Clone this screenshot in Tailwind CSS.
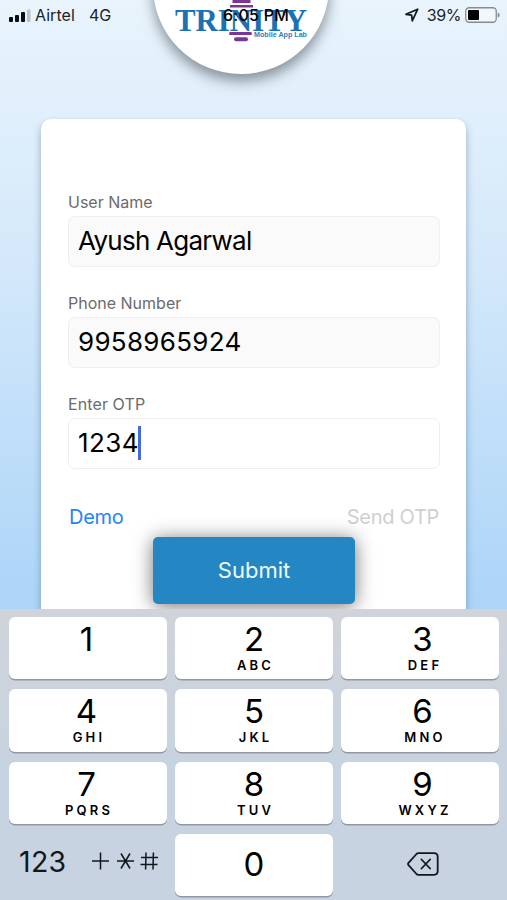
<!DOCTYPE html>
<html lang="en">
<head>
<meta charset="utf-8">
<meta name="viewport" content="width=device-width, initial-scale=1">
<title>Login</title>
<script src="https://cdn.jsdelivr.net/npm/@tailwindcss/browser@4"></script>
</head>
<body class="w-[507px] h-[900px] overflow-hidden font-['Inter','Liberation_Sans',sans-serif] text-black">
<div class="relative flex h-[900px] w-[507px] flex-col overflow-hidden bg-linear-to-b from-[#e9f4fc] from-0% via-[#d3e8fa] via-30% to-[#add5f8] to-66%">

  <!-- Round logo -->
  <div class="absolute left-[152.5px] -top-[102px] size-[176px] rounded-full bg-white shadow-[0_7px_13px_rgba(40,50,60,0.5)]">
    <svg class="absolute left-0 top-[102px]" width="176" height="74" viewBox="0 0 176 74">
      <g fill="#7b3592">
        <path d="M79.500 0h18v3h-18zM77 5h23v2.500h-23z"/>
        <rect x="76" y="32" width="23" height="3" rx="1.500"/>
        <rect x="81" y="37.200" width="14" height="4" rx="2"/>
      </g>
      <text x="22" y="30.500" textLength="132" lengthAdjust="spacingAndGlyphs" font-family="Liberation Serif, serif" font-weight="bold" font-size="31" fill="#1c70b4">TRINITY</text>
      <text x="101" y="36.700" textLength="53" lengthAdjust="spacingAndGlyphs" font-family="Liberation Sans, sans-serif" font-weight="bold" font-size="8" fill="#2c7fbc">Mobile App Lab</text>
    </svg>
  </div>

  <!-- Status bar -->
  <header class="relative flex h-[30px] items-center pl-[9px] pr-[7px] text-[16px] leading-none text-[#1b2329]">
    <svg width="22" height="13" viewBox="0 0 22 13"><g fill="#080d10"><rect x="0" y="8" width="4" height="5" rx="1"/><rect x="6" y="6" width="4" height="7" rx="1"/><rect x="12" y="3" width="4" height="10" rx="1"/></g><rect x="18" y="0.500" width="3.500" height="12.500" rx="1" fill="#b9c1cb"/></svg>
    <span class="ml-1 w-[40px] tracking-[0.05px]">Airtel</span>
    <span class="ml-[14px]">4G</span>
    <span class="absolute left-[223px] whitespace-nowrap font-medium tracking-[0.25px] text-black">6:05 PM</span>
    <svg class="ml-auto" width="14" height="14" viewBox="0 0 14 14" fill="none" stroke="#10181d" stroke-width="1.700" stroke-linejoin="round"><path d="M12.700 1.200 1 6.300 6.600 7.200 7.300 12.800Z"/></svg>
    <span class="ml-[8px] tracking-[-0.4px]">39%</span>
    <svg class="ml-[4px]" width="35" height="16" viewBox="0 0 35 16"><rect x="0.750" y="0.750" width="30.500" height="14.500" rx="3.500" fill="#f2f7fc" stroke="#858c92" stroke-width="1.300"/><rect x="3" y="3" width="11" height="10" rx="1" fill="#000"/><path d="M32.700 5.500q2 .5 2 2.500t-2 2.500z" fill="#858c92"/></svg>
  </header>

  <!-- Login card -->
  <main class="mx-[41px] mt-[89px] flex h-[520px] w-[425px] shrink-0 flex-col rounded-t-[10px] bg-white px-[27px] pt-[70px] shadow-[0_4px_7px_rgba(60,90,120,0.45)]">
    <div class="flex flex-col gap-[24px]">
      <label class="block h-[77px]">
        <span class="block h-[27px] text-[16px] leading-[26px] text-[#6b6b6b]">User Name</span>
        <span class="flex h-[51px] w-[372px] items-center rounded-[7px] border-[1.5px] border-[#efefef] bg-[#fafafa] pb-[2px] pl-[9px] text-[26px] tracking-[-0.75px]">Ayush Agarwal</span>
      </label>
      <label class="block h-[77px]">
        <span class="block h-[27px] text-[16px] leading-[26px] text-[#6b6b6b]">Phone Number</span>
        <span class="flex h-[51px] w-[372px] items-center rounded-[7px] border-[1.5px] border-[#efefef] bg-[#fafafa] pb-[2px] pl-[9px] text-[26px] tracking-[0.3px]">9958965924</span>
      </label>
      <label class="block h-[77px]">
        <span class="block h-[27px] text-[16px] leading-[26px] text-[#6b6b6b] tracking-[0.1px]">Enter OTP</span>
        <span class="flex h-[51px] w-[372px] items-center rounded-[7px] border-[1.5px] border-[#efefef] bg-white pb-[2px] pl-[9px] text-[26px] tracking-[0.4px]">1234<i class="-ml-[0.5px] h-[34px] w-[3px] bg-[#4668e0]"></i></span>
      </label>
    </div>
    <div class="mt-[36.600px] flex h-6 w-[371px] items-center justify-between pl-px text-[20px]">
      <a class="tracking-[-0.3px] text-[#1c86fb]">Demo</a>
      <span class="tracking-[-0.3px] text-[#cfcfcf]">Send OTP</span>
    </div>
    <button class="ml-[85px] mt-[8px] h-[67px] w-[202px] shrink-0 rounded-[5px] bg-[#2487c3] text-[22px] text-[#eefaff] shadow-[0_2px_19px_rgba(0,0,0,0.55)]">Submit</button>
  </main>

  <!-- Numeric keypad -->
  <section class="relative -mt-[30px] h-[291px] shrink-0 bg-linear-to-b from-[#d0d3da] to-[#c7d3e1] to-60% px-[9px] pt-[8px]">
    <div class="grid grid-cols-[158px_158px_158px] grid-rows-[62px_62.500px_62.500px_62px] gap-x-[8px] gap-y-[10px]">
      <div class="flex flex-col items-center rounded-[6px] bg-white pr-[3px] pt-[4px] shadow-[0_1.5px_0_#9398a0]"><b class="h-[36px] text-[33px] font-normal leading-[36px]">1</b></div>
      <div class="flex flex-col items-center rounded-[6px] bg-white pt-[4px] shadow-[0_1.5px_0_#9398a0]"><b class="h-[36px] text-[33px] font-normal leading-[36px]">2</b><small class="pl-[3px] text-[13px] font-semibold leading-[16px] tracking-[3.200px]">ABC</small></div>
      <div class="flex flex-col items-center rounded-[6px] bg-white pl-[5px] pt-[4px] shadow-[0_1.5px_0_#9398a0]"><b class="h-[36px] text-[33px] font-normal leading-[36px]">3</b><small class="pl-[5px] text-[13px] font-semibold leading-[16px] tracking-[3.200px]">DEF</small></div>
      <div class="flex flex-col items-center rounded-[6px] bg-white pr-[3px] pt-[4px] shadow-[0_1.5px_0_#9398a0]"><b class="h-[36px] text-[33px] font-normal leading-[36px]">4</b><small class="pl-[5px] text-[13px] font-semibold leading-[16px] tracking-[3.200px]">GHI</small></div>
      <div class="flex flex-col items-center rounded-[6px] bg-white pt-[4px] shadow-[0_1.5px_0_#9398a0]"><b class="h-[36px] text-[33px] font-normal leading-[36px]">5</b><small class="pl-[3px] text-[13px] font-semibold leading-[16px] tracking-[3.200px]">JKL</small></div>
      <div class="flex flex-col items-center rounded-[6px] bg-white pl-[5px] pt-[4px] shadow-[0_1.5px_0_#9398a0]"><b class="h-[36px] text-[33px] font-normal leading-[36px]">6</b><small class="pl-[5px] text-[13px] font-semibold leading-[16px] tracking-[3.200px]">MNO</small></div>
      <div class="flex flex-col items-center rounded-[6px] bg-white pr-[3px] pt-[4px] shadow-[0_1.5px_0_#9398a0]"><b class="h-[36px] text-[33px] font-normal leading-[36px]">7</b><small class="pl-[5px] text-[13px] font-semibold leading-[16px] tracking-[3.200px]">PQRS</small></div>
      <div class="flex flex-col items-center rounded-[6px] bg-white pt-[4px] shadow-[0_1.5px_0_#9398a0]"><b class="h-[36px] text-[33px] font-normal leading-[36px]">8</b><small class="pl-[3px] text-[13px] font-semibold leading-[16px] tracking-[3.200px]">TUV</small></div>
      <div class="flex flex-col items-center rounded-[6px] bg-white pl-[5px] pt-[4px] shadow-[0_1.5px_0_#9398a0]"><b class="h-[36px] text-[33px] font-normal leading-[36px]">9</b><small class="pl-[5px] text-[13px] font-semibold leading-[16px] tracking-[3.200px]">WXYZ</small></div>
      <div class="flex items-center pb-[6px] pl-[10px] text-[#10171d]">
        <span class="w-[48px] whitespace-nowrap text-[28.500px] leading-none tracking-[0.3px]">123</span>
        <svg class="ml-[25px]" width="67" height="20" viewBox="0 0 67 20" fill="none" stroke="#10171d" stroke-width="1.500"><path d="M0 9h17M8.500 .5v17M25 9h17M29 1.500l9 15M38 1.500l-9 15M49 5.500h17M48.500 12.500h17M54 .5l-.4 17M61.400 .5l-.4 17"/></svg>
      </div>
      <div class="flex flex-col items-center rounded-[6px] bg-white pt-[12px] shadow-[0_1.5px_0_#9398a0]"><b class="h-[36px] text-[33px] font-normal leading-[36px]">0</b></div>
      <div class="flex items-center justify-center pb-[3px] pl-[6px]">
        <svg width="32" height="24" viewBox="0 0 32 24" fill="none" stroke="#10171d" stroke-width="1.800" stroke-linecap="round" stroke-linejoin="round"><path d="M11.300 1.200H27q3.700 0 3.700 3.700v14.200q0 3.700-3.700 3.700H11.300Q10.300 22.800 9.500 22L1.500 13.200Q.6 12 1.500 10.800L9.500 2Q10.300 1.200 11.300 1.200ZM14.500 7.500l8.600 9M23.100 7.500l-8.600 9"/></svg>
      </div>
    </div>
  </section>
</div>
</body>
</html>
